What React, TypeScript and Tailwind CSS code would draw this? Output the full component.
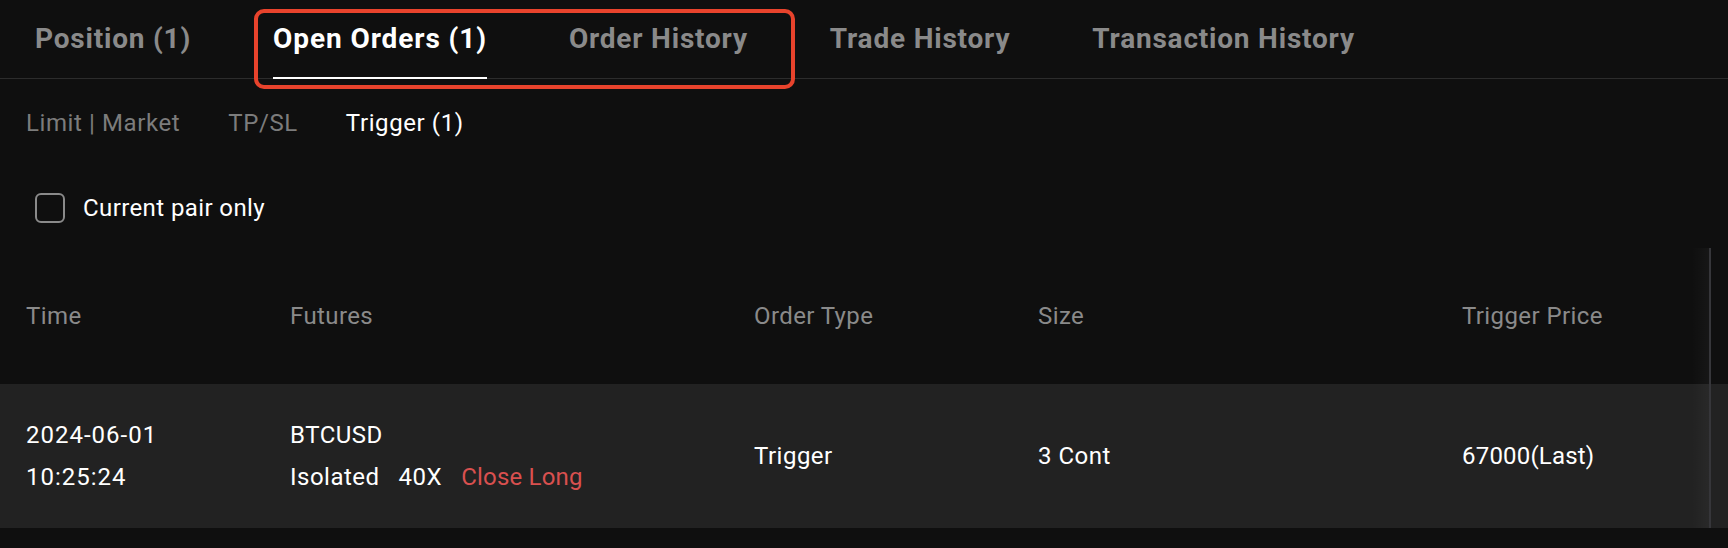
import React from "react";

const font = { fontFamily: "Roboto, 'Noto Sans', 'Liberation Sans', sans-serif" };

export default function App() {
  const tabs = [
    { label: "Position (1)", active: false },
    { label: "Open Orders (1)", active: true },
    { label: "Order History", active: false },
    { label: "Trade History", active: false },
    { label: "Transaction History", active: false },
  ];
  return (
    <div className="w-[1728px] h-[548px] bg-[#0f0f0f] overflow-hidden text-white" style={font}>
      {/* top tabs */}
      <div className="relative h-[79px] border-b border-[#2c2c2c] flex items-stretch pl-[35px] gap-[82px]">
        {tabs.map((t) => (
          <div
            key={t.label}
            className={
              t.active
                ? "flex items-center h-[79px] border-b-[2px] border-white text-white text-[28px] font-bold tracking-[0.9px] pt-[1px]"
                : "flex items-center h-[79px] border-b-[2px] border-transparent text-[#8a8a8a] text-[28px] font-bold tracking-[0.8px] pt-[1px]"
            }
          >
            {t.label}
          </div>
        ))}
        <div className="absolute left-[254px] top-[9px] w-[541px] h-[80px] border-[4px] border-[#e8432c] rounded-[10px] pointer-events-none" />
      </div>

      {/* sub tabs */}
      <div className="flex items-center h-[30px] mt-[29px] pl-[26px] gap-[48px] text-[24px] tracking-[0.6px]">
        <span className="text-[#7c7c7c]">Limit | Market</span>
        <span className="text-[#7c7c7c]">TP/SL</span>
        <span className="text-white">Trigger (1)</span>
      </div>

      {/* checkbox */}
      <div className="flex items-center h-[31px] mt-[54px] pl-[35px] gap-[18px] text-[24px] tracking-[0.4px]">
        <div className="w-[30px] h-[30px] border-2 border-[#8a8a8a] rounded-[6px]" />
        <span className="text-white">Current pair only</span>
      </div>

      {/* table */}
      <div className="relative mt-[25px]">
        <div className="grid grid-cols-[264px_464px_284px_424px_1fr] h-[136px] items-center pl-[26px] text-[24px] tracking-[0.4px] text-[#8a8a8a]">
          <span>Time</span>
          <span>Futures</span>
          <span>Order Type</span>
          <span>Size</span>
          <span>Trigger Price</span>
        </div>
        <div className="grid grid-cols-[264px_464px_284px_424px_1fr] h-[144px] items-center pl-[26px] text-[24px] tracking-[0.5px] bg-[#222222] text-white">
          <div className="flex flex-col gap-[12px] leading-[30px]">
            <span className="tracking-[1px]">2024-06-01</span>
            <span className="tracking-[1px]">10:25:24</span>
          </div>
          <div className="flex flex-col gap-[12px] leading-[30px]">
            <span>BTCUSD</span>
            <span className="flex gap-[19px]">
              <span>Isolated</span>
              <span>40X</span>
              <span className="text-[#d9504f] tracking-[0.2px]">Close Long</span>
            </span>
          </div>
          <span>Trigger</span>
          <span>3 Cont</span>
          <span className="tracking-[0.2px]">67000(Last)</span>
        </div>
        <div className="absolute top-0 bottom-0 left-[1692px] w-[17px] bg-gradient-to-r from-transparent to-[#ffffff08] pointer-events-none" />
        <div className="absolute top-0 bottom-0 left-[1709px] w-[2px] bg-[#36363a] pointer-events-none" />
      </div>
    </div>
  );
}
